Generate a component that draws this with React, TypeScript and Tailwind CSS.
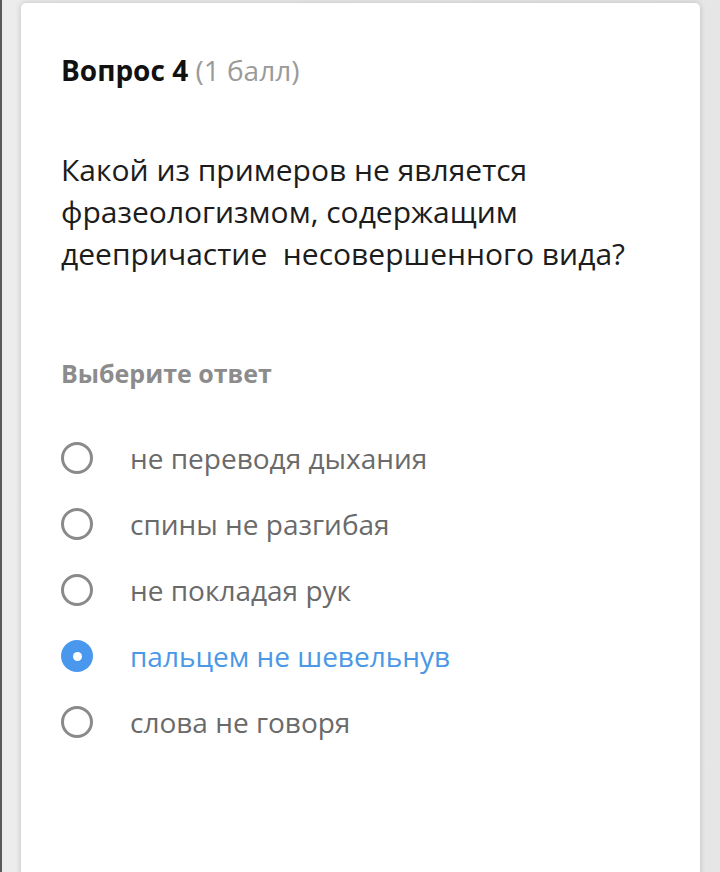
const options = [
  "не переводя дыхания",
  "спины не разгибая",
  "не покладая рук",
  "пальцем не шевельнув",
  "слова не говоря",
];

const selected = 3;

function Radio({ checked }: { checked: boolean }) {
  if (checked) {
    return (
      <span className="flex h-[32px] w-[32px] shrink-0 items-center justify-center rounded-full bg-[#4a98ee]">
        <span className="h-[9px] w-[9px] rounded-full bg-white" />
      </span>
    );
  }
  return <span className="h-[32px] w-[32px] shrink-0 rounded-full border-[3.5px] border-[#8a8a8a]" />;
}

export default function App() {
  return (
    <div
      className="h-[872px] w-[720px] overflow-hidden border-l-2 border-[#5a5a5a] bg-gradient-to-r from-[#ececec] to-[#e6e6e6] pl-[19px] pr-[20px] pt-[3px]"
      style={{ fontFamily: '"Open Sans", "Noto Sans", sans-serif' }}
    >
      <div className="h-[880px] rounded-[5px] bg-white px-[40px] pt-[48px] shadow-[0_0_6px_rgba(0,0,0,0.18)]">
        <h2 className="text-[28px] leading-[38px]">
          <span className="font-bold text-[#111]">Вопрос 4</span>{" "}
          <span className="text-[#9a9a9a]">(1 балл)</span>
        </h2>

        <p className="mt-[60px] whitespace-pre-wrap text-[30px] leading-[42px] text-[#1c1c1c]">
          {"Какой из примеров не является фразеологизмом, содержащим деепричастие  несовершенного вида?"}
        </p>

        <div className="mt-[82px] text-[25px] font-bold leading-[32px] text-[#8c8c8c]">Выберите ответ</div>

        <div className="mt-[36px] flex flex-col">
          {options.map((o, i) => (
            <label key={o} className="flex h-[66px] items-center gap-[37px]">
              <Radio checked={i === selected} />
              <span
                className={
                  "text-[28px] leading-[36px] " + (i === selected ? "text-[#4a98e6]" : "text-[#6a6a6a]")
                }
              >
                {o}
              </span>
            </label>
          ))}
        </div>
      </div>
    </div>
  );
}
